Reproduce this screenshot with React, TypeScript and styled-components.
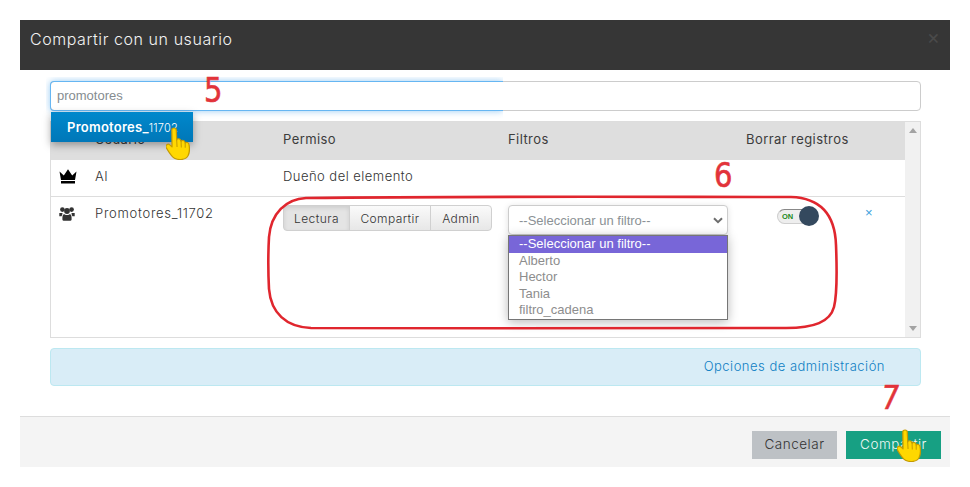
import styled, { createGlobalStyle } from "styled-components";

const GlobalStyle = createGlobalStyle`
  html, body {
    margin: 0;
    padding: 0;
    background: #fff;
  }
`;

const FILTERS = ["Alberto", "Hector", "Tania", "filtro_cadena"];

const Hand = ({ className }: { className?: string }) => (
  <svg className={className} viewBox="1 0 21.5 33" width="24" height="33" preserveAspectRatio="none">
    <path
      d="M6.2 3 C6.2 .4 10.2 .4 10.2 3 L10.6 13 C11 11.2 14 11.4 14.2 13.6 L14.5 14.4 C15.2 12.8 17.8 13.2 18 15.2 L18.2 16 C19 14.8 21.4 15.4 21.6 17.4 C22.2 21 22.4 25 20.8 28.6 C19 32.8 12.6 33.6 8.6 31.2 C5.4 29 3.4 24.6 1.2 20.6 C0 18.2 2.8 16.2 4.4 17.8 L6.4 19.8 Z"
      fill="#ffd800"
      stroke="#c49a00"
      strokeWidth="1.1"
      strokeLinejoin="round"
    />
    <path d="M10.6 13 L10.9 20 M14.5 14.4 L14.7 20.4 M18.2 16 L18.2 20.8" stroke="#c49a00" strokeWidth="0.9" fill="none" />
  </svg>
);

const CrownIcon = () => (
  <svg viewBox="0 0 18 15" width="18" height="15">
    <path d="M0.5 2.5 L4.8 6.6 L9 0.3 L13.2 6.6 L17.5 2.5 L16 11 H2 Z M2 12 H16 V14.6 H2 Z" fill="#000" />
  </svg>
);

const UsersIcon = () => (
  <svg viewBox="0 0 16 14" width="16" height="14">
    <circle cx="3.4" cy="2.6" r="2.3" fill="#333" />
    <circle cx="12.6" cy="2.6" r="2.3" fill="#333" />
    <circle cx="8" cy="4" r="2.9" fill="#333" />
    <path d="M0.3 6 H3.5 C3.4 7.5 3.1 8.4 2.6 9.2 H0.3 Z M15.7 6 H12.5 C12.6 7.5 12.9 8.4 13.4 9.2 H15.7 Z" fill="#333" />
    <path d="M3.8 8.2 C4.2 7.3 5 7 5.8 7.4 C7 8.1 9 8.1 10.2 7.4 C11 7 11.8 7.3 12.2 8.2 C12.6 9.4 12.7 11 12.6 12.4 C12.4 13.4 11.8 13.8 10.9 13.8 H5.1 C4.2 13.8 3.6 13.4 3.4 12.4 C3.3 11 3.4 9.4 3.8 8.2 Z" fill="#333" />
  </svg>
);

const App = () => (
  <Page>
    <GlobalStyle />
    <Dialog>
      <Header>
        <Title>Compartir con un usuario</Title>
        <Close>×</Close>
      </Header>
      <Body>
        <SearchWrap>
          <SearchInput value="promotores" readOnly />
          <FocusGlow />
          <Suggestion>
            <strong>Promotores_</strong>
            <small>11702</small>
          </Suggestion>
        </SearchWrap>
        <TableBox>
          <TableContent>
            <HeadRow>
              <span />
              <span>Usuario</span>
              <span>Permiso</span>
              <span>Filtros</span>
              <span>Borrar registros</span>
            </HeadRow>
            <OwnerRow>
              <RowIcon>
                <CrownIcon />
              </RowIcon>
              <span>AI</span>
              <span>Dueño del elemento</span>
            </OwnerRow>
            <MemberRow>
              <RowIcon>
                <UsersIcon />
              </RowIcon>
              <MemberName>Promotores_11702</MemberName>
              <ButtonGroup>
                <GroupButton $active $width={67}>Lectura</GroupButton>
                <GroupButton $width={82}>Compartir</GroupButton>
                <GroupButton $width={62}>Admin</GroupButton>
              </ButtonGroup>
              <FilterCell>
                <SelectBox>
                  --Seleccionar un filtro--
                  <svg width="10" height="7" viewBox="0 0 10 7">
                    <path d="M1 1.2 L5 5.2 L9 1.2" stroke="#6d6d6d" strokeWidth="2" fill="none" />
                  </svg>
                </SelectBox>
                <OptionList>
                  <Option $selected>--Seleccionar un filtro--</Option>
                  {FILTERS.map((name) => (
                    <Option key={name}>{name}</Option>
                  ))}
                </OptionList>
              </FilterCell>
              <ToggleCell>
                <Toggle>
                  <ToggleLabel>ON</ToggleLabel>
                  <Knob />
                </Toggle>
                <Remove>×</Remove>
              </ToggleCell>
            </MemberRow>
          </TableContent>
          <Scrollbar>
            <ArrowUp />
            <ArrowDown />
          </Scrollbar>
        </TableBox>
        <AdminAlert>
          <AdminLink>Opciones de administración</AdminLink>
        </AdminAlert>
      </Body>
      <Footer>
        <CancelButton>Cancelar</CancelButton>
        <ShareButton>Compartir</ShareButton>
      </Footer>
    </Dialog>

    <Loop viewBox="0 0 574 136" width="574" height="136">
      <path
        d="M40 3 C200 1 400 2 525 2 C555 3 569 20 570 50 C571 75 571 100 568 112 C564 127 548 133 520 133 C380 134 200 133 45 133 C20 132 5 118 3 94 C2 75 2 60 3 42 C5 18 20 4 40 3 Z"
        fill="none"
        stroke="#e0262e"
        strokeWidth="2.6"
      />
    </Loop>
    <Mark $x={204} $y={71}>5</Mark>
    <Mark $x={714} $y={156}>6</Mark>
    <SkewMark $x={881} $y={378}>7</SkewMark>
    <HandOne />
    <HandTwo />
  </Page>
);

const Page = styled.div`
  position: relative;
  width: 970px;
  height: 487px;
  padding: 20px;
  box-sizing: border-box;
  overflow: hidden;
  background: #fff;
  font-family: "Inter", "Liberation Sans", sans-serif;
  color: #4a4a4a;
`;

const Dialog = styled.div`
  display: flex;
  flex-direction: column;
  width: 930px;
  height: 447px;
  background: #fff;
`;

const Header = styled.header`
  display: flex;
  justify-content: space-between;
  flex: 0 0 50px;
  box-sizing: border-box;
  padding: 9px 10px 0;
  background: #363636;
`;

const Title = styled.h1`
  margin: 0;
  font-size: 16px;
  line-height: 20px;
  font-weight: 300;
  letter-spacing: 0.56px;
  color: #f2f2f2;
`;

const Close = styled.span`
  font-size: 20px;
  line-height: 8px;
  margin-top: 4px;
  color: #4a4a4a;
`;

const Body = styled.div`
  display: flex;
  flex-direction: column;
  flex: 1;
  padding: 11px 29px 0 30px;
`;

const SearchWrap = styled.div`
  position: relative;
  height: 30px;
  margin-bottom: 10px;
`;

const SearchInput = styled.input`
  display: block;
  width: 100%;
  height: 30px;
  box-sizing: border-box;
  padding: 0 6px 2px;
  border: 1px solid #ccc;
  border-radius: 4px;
  outline: none;
  font: 13px "Liberation Sans", Arial, sans-serif;
  color: #858c90;
`;

const FocusGlow = styled.div`
  position: absolute;
  inset: 0 auto 0 0;
  width: 453px;
  box-sizing: border-box;
  border: 1px solid #66b6f2;
  border-right: none;
  border-radius: 4px 0 0 4px;
  box-shadow: 0 0 7px rgba(82, 168, 236, 0.6);
  clip-path: inset(-4px 0 -8px -4px);
  pointer-events: none;
`;

const Suggestion = styled.div`
  position: absolute;
  top: 31px;
  left: 1px;
  z-index: 3;
  width: 142px;
  height: 30px;
  box-sizing: border-box;
  padding-left: 16px;
  background: linear-gradient(#0088cc, #0077b8);
  box-shadow: 0 3px 8px rgba(0, 0, 0, 0.35);
  color: #fff;
  line-height: 28px;
  strong {
    font-size: 13px;
    font-weight: 600;
    letter-spacing: 0.25px;
  }
  small {
    font-size: 11px;
    font-weight: 300;
    letter-spacing: 0.2px;
  }
`;

const TableBox = styled.div`
  display: flex;
  height: 217px;
  box-sizing: border-box;
  border: 1px solid #ddd;
  margin-bottom: 10px;
`;

const TableContent = styled.div`
  flex: 1;
  min-width: 0;
`;

const Scrollbar = styled.div`
  display: flex;
  flex-direction: column;
  justify-content: space-between;
  align-items: center;
  flex: 0 0 15px;
  padding: 6px 0;
  box-sizing: border-box;
  background: #f1f1f1;
`;

const ArrowUp = styled.i`
  width: 0;
  height: 0;
  border: 4px solid transparent;
  border-top: none;
  border-bottom: 5px solid #a3a3a3;
`;

const ArrowDown = styled(ArrowUp)`
  transform: rotate(180deg);
`;

const rowGrid = "44px 188px 225px 238px 1fr";

const HeadRow = styled.div`
  display: grid;
  grid-template-columns: ${rowGrid};
  align-items: center;
  height: 38px;
  padding-bottom: 5px;
  box-sizing: border-box;
  background: #dedede;
  font-size: 13px;
  letter-spacing: 0.42px;
  font-weight: 400;
  color: #3c3c3c;
`;

const OwnerRow = styled.div`
  display: grid;
  grid-template-columns: ${rowGrid};
  align-items: center;
  height: 37px;
  padding-bottom: 5px;
  box-sizing: border-box;
  border-bottom: 1px solid #ddd;
  font-size: 13px;
  font-weight: 300;
  letter-spacing: 0.47px;
  color: #333;
`;

const MemberRow = styled.div`
  display: grid;
  grid-template-columns: ${rowGrid};
  align-items: start;
  padding-top: 8px;
  font-size: 13px;
  font-weight: 300;
  letter-spacing: 0.3px;
  color: #333;
`;

const MemberName = styled.span`
  letter-spacing: 0.72px;
`;

const RowIcon = styled.span`
  display: flex;
  padding: 2px 0 0 8px;
`;

const ButtonGroup = styled.div`
  display: flex;
  width: 209px;
`;

const GroupButton = styled.button<{ $active?: boolean; $width: number }>`
  flex: 0 0 ${(p) => p.$width}px;
  height: 26px;
  margin: 0 0 0 -1px;
  padding: 0;
  border: 1px solid #d0d0d0;
  background: ${(p) => (p.$active ? "#e4e4e4" : "linear-gradient(#fafafa, #e7e7e7)")};
  box-shadow: ${(p) => (p.$active ? "inset 0 2px 4px rgba(0,0,0,.1)" : "none")};
  font: inherit;
  font-size: 12px;
  font-weight: 300;
  letter-spacing: 0.4px;
  color: #333;
  &:first-child {
    margin-left: 0;
    border-radius: 4px 0 0 4px;
  }
  &:last-child {
    border-radius: 0 4px 4px 0;
  }
`;

const FilterCell = styled.div`
  position: relative;
  width: 220px;
  font-family: "Liberation Sans", Arial, sans-serif;
  font-weight: 400;
  letter-spacing: 0;
  font-size: 13px;
`;

const SelectBox = styled.div`
  display: flex;
  align-items: center;
  justify-content: space-between;
  height: 30px;
  box-sizing: border-box;
  padding: 0 4px 0 10px;
  border: 1px solid #ccc;
  border-radius: 4px;
  background: #fff;
  box-shadow: 0 1px 6px rgba(0, 0, 0, 0.12);
  color: #8b9195;
`;

const OptionList = styled.div`
  position: absolute;
  top: 30px;
  left: 0;
  z-index: 2;
  width: 220px;
  box-sizing: border-box;
  border: 1px solid #767676;
  background: #fff;
  box-shadow: 0 2px 10px rgba(0, 0, 0, 0.28);
`;

const Option = styled.div<{ $selected?: boolean }>`
  height: ${(p) => (p.$selected ? 17 : 16.4)}px;
  line-height: 16px;
  padding-left: 10px;
  background: ${(p) => (p.$selected ? "#7866d8" : "#fff")};
  color: ${(p) => (p.$selected ? "#fff" : "#8d8d8d")};
`;

const ToggleCell = styled.div`
  display: flex;
  padding: 1px 0 0 31px;
`;

const Toggle = styled.div`
  position: relative;
  width: 32px;
  height: 15px;
  margin-top: 3px;
  box-sizing: border-box;
  border: 1px solid #cfcfcf;
  border-top-color: #888;
  border-radius: 8px;
  background: #eee;
`;

const ToggleLabel = styled.span`
  display: block;
  padding-left: 4px;
  font: 700 7.5px/13px "Liberation Sans", Arial, sans-serif;
  letter-spacing: 0;
  color: #1c8a1c;
`;

const Knob = styled.span`
  position: absolute;
  top: -4px;
  left: 21px;
  width: 20px;
  height: 20px;
  border-radius: 50%;
  background: #34495e;
`;

const Remove = styled.span`
  margin: 0 0 0 56px;
  font: 13px/14px "Liberation Sans", Arial, sans-serif;
  color: #3aa0dc;
`;

const AdminAlert = styled.div`
  display: flex;
  justify-content: flex-end;
  align-items: center;
  height: 38px;
  box-sizing: border-box;
  padding: 0 35px 3px 0;
  border: 1px solid #bce8f1;
  border-radius: 4px;
  background: #d9edf7;
`;

const AdminLink = styled.a`
  font-size: 13px;
  font-weight: 300;
  letter-spacing: 0.5px;
  color: #0f80c4;
`;

const Footer = styled.footer`
  display: flex;
  justify-content: flex-end;
  gap: 9px;
  flex: 0 0 51px;
  box-sizing: border-box;
  padding: 14px 9px 0 0;
  border-top: 1px solid #ddd;
  background: #f4f4f4;
`;

const CancelButton = styled.button`
  width: 85px;
  height: 28px;
  padding: 0 0 2px;
  border: none;
  background: #bdc1c5;
  font: inherit;
  font-size: 13.5px;
  font-weight: 300;
  letter-spacing: 0.5px;
  color: #333;
`;

const ShareButton = styled(CancelButton)`
  width: 95px;
  background: #17a083;
  color: #eef8f5;
`;

const Loop = styled.svg`
  position: absolute;
  left: 266px;
  top: 195px;
  pointer-events: none;
  z-index: 4;
`;

const Mark = styled.span<{ $x: number; $y: number }>`
  position: absolute;
  left: ${(p) => p.$x}px;
  top: ${(p) => p.$y}px;
  z-index: 5;
  font: 400 33px/40px "DejaVu Sans", sans-serif;
  -webkit-text-stroke: 0.6px #e2333a;
  transform: scaleX(0.88);
  transform-origin: left;
  color: #e2333a;
`;

const SkewMark = styled(Mark)`
  transform: scaleX(0.88) skewX(-8deg);
`;

const HandOne = styled(Hand)`
  position: absolute;
  left: 166px;
  top: 127px;
  z-index: 6;
`;

const HandTwo = styled(Hand)`
  position: absolute;
  left: 897px;
  top: 429px;
  z-index: 6;
`;

export default App;
